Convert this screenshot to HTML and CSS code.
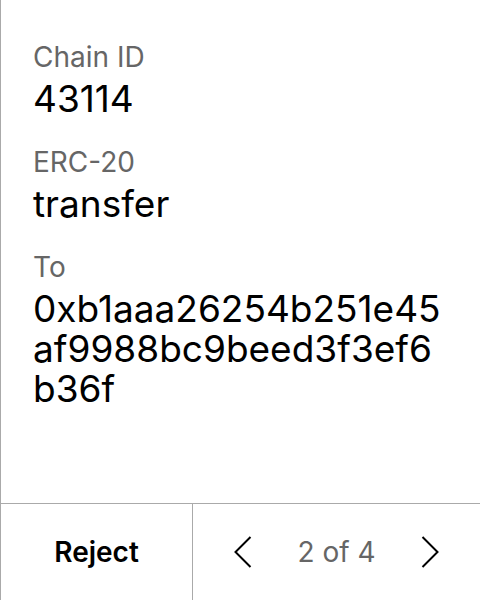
FILE: index.html
```html
<!DOCTYPE html>
<html>
<head>
<meta charset="utf-8">
<link rel="stylesheet" href="styles.css">
</head>
<body>
<div class="screen">
  <div class="content">
    <div class="field">
      <div class="label">Chain ID</div>
      <div class="value">43114</div>
    </div>
    <div class="field">
      <div class="label">ERC-20</div>
      <div class="value">transfer</div>
    </div>
    <div class="field">
      <div class="label">To</div>
      <div class="value address"><div class="line">0xb1aaa26254b251e45</div><div class="line">af9988bc9beed3f3ef6</div><div class="line">b36f</div></div>
    </div>
  </div>
  <div class="footer">
    <div class="reject">Reject</div>
    <div class="pager">
      <svg class="chev" width="18" height="32" viewBox="0 0 18 32"><path d="M16.5 1 L1.5 16 L16.5 31" fill="none" stroke="#000" stroke-width="2"/></svg>
      <span class="count">2 of 4</span>
      <svg class="chev" width="18" height="32" viewBox="0 0 18 32"><path d="M1.5 1 L16.5 16 L1.5 31" fill="none" stroke="#000" stroke-width="2"/></svg>
    </div>
  </div>
</div>
</body>
</html>
```
FILE: styles.css
```css
html, body {
  margin: 0;
  padding: 0;
  background: #fff;
}
.screen {
  width: 480px;
  height: 600px;
  box-sizing: border-box;
  border-left: 1px solid #aaa;
  display: flex;
  flex-direction: column;
  font-family: Inter, "Noto Sans", sans-serif;
  color: #000;
}
.content {
  flex: 1;
  padding: 41px 0 0 32px;
  display: flex;
  flex-direction: column;
  gap: 27px;
}
.label {
  font-size: 28px;
  line-height: 32px;
  color: #666;
}
.value {
  font-size: 37px;
  line-height: 40px;
  margin-top: 6px;
}
.line {
  height: 40px;
}
.footer {
  height: 96px;
  border-top: 1px solid #aaa;
  display: flex;
}
.reject {
  width: 191px;
  border-right: 1px solid #aaa;
  display: flex;
  align-items: center;
  justify-content: center;
  font-size: 28px;
  font-weight: 600;
}
.pager {
  flex: 1;
  display: flex;
  align-items: center;
  justify-content: center;
  gap: 45px;
}
.count {
  font-size: 28px;
  color: #666;
}
.chev {
  display: block;
}
```
